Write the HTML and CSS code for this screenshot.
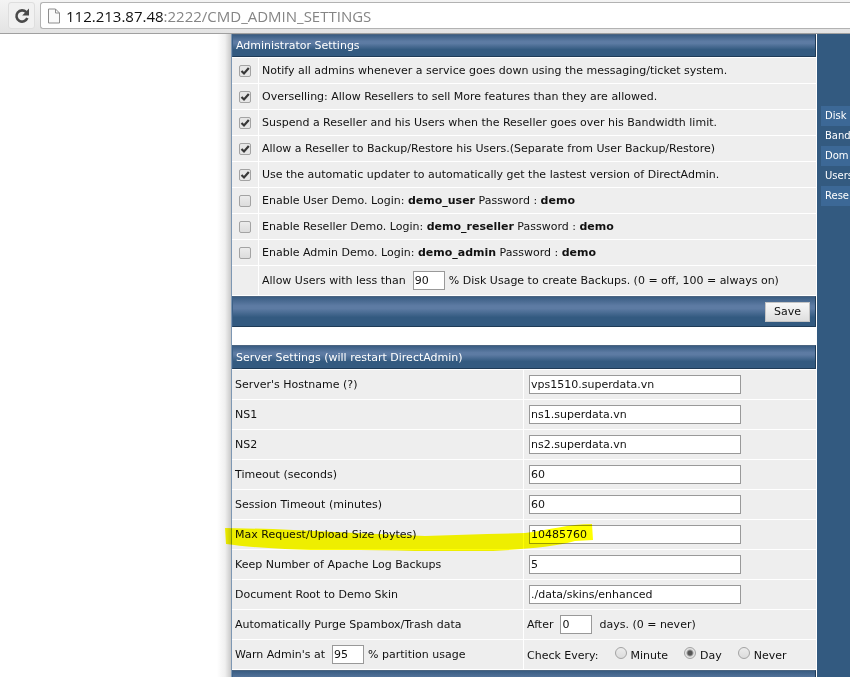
FILE: index.html
```
<!DOCTYPE html>
<html lang="en">
<head>
    <meta charset="UTF-8">
    <meta name="viewport" content="width=device-width, initial-scale=1.0">
    <title>Administrator Settings</title>
    <link rel="stylesheet" href="styles.css">
</head>
<body>
    <!-- Browser toolbar -->
    <div class="toolbar">
        <button class="reload" type="button" aria-label="Reload">
            <svg width="18" height="18" viewBox="0 0 18 18">
                <path d="M13.2 5.2A5.6 5.6 0 1 0 14.3 11" fill="none" stroke="#4a4a4a" stroke-width="2.6"/>
                <path d="M16 1.6V8.4H9.2Z" fill="#4a4a4a"/>
            </svg>
        </button>
        <div class="address">
            <svg width="12" height="16" viewBox="0 0 12 16">
                <path d="M.5 1H7.5L11.5 5V15H.5Z" fill="#fafafa" stroke="#8d8d8d"/>
                <path d="M7.5 1V5H11.5" fill="none" stroke="#8d8d8d"/>
            </svg>
            <span class="url"><span class="host">112.213.87.48</span>:2222/CMD_ADMIN_SETTINGS</span>
        </div>
    </div>

    <div class="page">
        <div class="margin"></div>

        <form class="main">
            <table class="admin">
                <colgroup>
                    <col class="check-col">
                    <col>
                </colgroup>
                <thead>
                    <tr><th colspan="2">Administrator Settings</th></tr>
                </thead>
                <tbody>
                    <tr>
                        <td><input type="checkbox" id="notify" checked></td>
                        <td><label for="notify">Notify all admins whenever a service goes down using the messaging/ticket system.</label></td>
                    </tr>
                    <tr>
                        <td><input type="checkbox" id="oversell" checked></td>
                        <td><label for="oversell">Overselling: Allow Resellers to sell More features than they are allowed.</label></td>
                    </tr>
                    <tr>
                        <td><input type="checkbox" id="suspend" checked></td>
                        <td><label for="suspend">Suspend a Reseller and his Users when the Reseller goes over his Bandwidth limit.</label></td>
                    </tr>
                    <tr>
                        <td><input type="checkbox" id="backup" checked></td>
                        <td><label for="backup">Allow a Reseller to Backup/Restore his Users.(Separate from User Backup/Restore)</label></td>
                    </tr>
                    <tr>
                        <td><input type="checkbox" id="autoupdate" checked></td>
                        <td><label for="autoupdate">Use the automatic updater to automatically get the lastest version of DirectAdmin.</label></td>
                    </tr>
                    <tr>
                        <td><input type="checkbox" id="demouser"></td>
                        <td><label for="demouser">Enable User Demo. Login: <b>demo_user</b> Password : <b>demo</b></label></td>
                    </tr>
                    <tr>
                        <td><input type="checkbox" id="demoreseller"></td>
                        <td><label for="demoreseller">Enable Reseller Demo. Login: <b>demo_reseller</b> Password : <b>demo</b></label></td>
                    </tr>
                    <tr>
                        <td><input type="checkbox" id="demoadmin"></td>
                        <td><label for="demoadmin">Enable Admin Demo. Login: <b>demo_admin</b> Password : <b>demo</b></label></td>
                    </tr>
                    <tr class="tall">
                        <td></td>
                        <td>
                            <div class="line">
                                <label for="usage">Allow Users with less than</label>
                                <input class="short" type="text" id="usage" value="90">
                                <span>% Disk Usage to create Backups. (0 = off, 100 = always on)</span>
                            </div>
                        </td>
                    </tr>
                </tbody>
            </table>
            <div class="bar"><button class="save" type="button">Save</button></div>

            <table class="server">
                <thead>
                    <tr><th colspan="2">Server Settings (will restart DirectAdmin)</th></tr>
                </thead>
                <tbody>
                    <tr>
                        <td><label for="hostname">Server's Hostname (?)</label></td>
                        <td><input class="long" type="text" id="hostname" value="vps1510.superdata.vn"></td>
                    </tr>
                    <tr>
                        <td><label for="ns1">NS1</label></td>
                        <td><input class="long" type="text" id="ns1" value="ns1.superdata.vn"></td>
                    </tr>
                    <tr>
                        <td><label for="ns2">NS2</label></td>
                        <td><input class="long" type="text" id="ns2" value="ns2.superdata.vn"></td>
                    </tr>
                    <tr>
                        <td><label for="timeout">Timeout (seconds)</label></td>
                        <td><input class="long" type="text" id="timeout" value="60"></td>
                    </tr>
                    <tr>
                        <td><label for="session">Session Timeout (minutes)</label></td>
                        <td><input class="long" type="text" id="session" value="60"></td>
                    </tr>
                    <tr>
                        <td class="marked">
                            <label for="maxsize">Max Request/Upload Size (bytes)</label>
                            <!-- Highlighter stroke -->
                            <svg class="marker" width="370" height="32" viewBox="0 0 370 32">
                                <path d="M0 8L48 9L130 13L200 16L262 14L300 13C325 10 343 4 367 4L368 20L350 21C330 27 300 29 268 31H190C140 29 90 31 60 29C35 28 15 26 1 24Z" fill="#ffff00"/>
                            </svg>
                        </td>
                        <td><input class="long" type="text" id="maxsize" value="10485760"></td>
                    </tr>
                    <tr>
                        <td><label for="logs">Keep Number of Apache Log Backups</label></td>
                        <td><input class="long" type="text" id="logs" value="5"></td>
                    </tr>
                    <tr>
                        <td><label for="docroot">Document Root to Demo Skin</label></td>
                        <td><input class="long" type="text" id="docroot" value="./data/skins/enhanced"></td>
                    </tr>
                    <tr>
                        <td><label for="purge">Automatically Purge Spambox/Trash data</label></td>
                        <td>
                            <div class="line purge">
                                <span>After</span>
                                <input class="short" type="text" id="purge" value="0">
                                <span>days. (0 = never)</span>
                            </div>
                        </td>
                    </tr>
                    <tr>
                        <td>
                            <div class="line">
                                <label for="warn">Warn Admin's at</label>
                                <input class="short" type="text" id="warn" value="95">
                                <span>% partition usage</span>
                            </div>
                        </td>
                        <td>
                            <div class="line every">
                                <span>Check Every:</span>
                                <label><input type="radio" name="every">Minute</label>
                                <label><input type="radio" name="every" checked>Day</label>
                                <label><input type="radio" name="every">Never</label>
                            </div>
                        </td>
                    </tr>
                </tbody>
            </table>
            <div class="bar"></div>
        </form>

        <!-- Usage panel, runs off the right edge -->
        <div class="side">
            <ul>
                <li>Disk</li>
                <li>Band</li>
                <li>Dom</li>
                <li>Users</li>
                <li>Rese</li>
            </ul>
        </div>
    </div>
</body>
</html>
```
FILE: styles.css
```
* {
    box-sizing: border-box;
}

body {
    margin: 0;
    height: 100vh;
    overflow: hidden;
    display: flex;
    flex-direction: column;
    font-family: Verdana, "DejaVu Sans", sans-serif;
    font-size: 11px;
    color: #111;
    background: #fff;
}

input, button {
    font: inherit;
    color: inherit;
    margin: 0;
}

/* Browser toolbar */
.toolbar {
    display: flex;
    flex: none;
    align-items: flex-start;
    gap: 5px;
    height: 34px;
    padding: 2px 0 0 8px;
    background: linear-gradient(#f4f4f4, #e3e3e3);
    border-bottom: 1px solid #a0a0a0;
}

.reload {
    width: 27px;
    height: 27px;
    padding: 4px;
    border: 1px solid #dedede;
    border-radius: 3px;
    background: #f1f1f1;
}

.reload svg {
    display: block;
}

.address {
    display: flex;
    flex: 1;
    align-items: center;
    gap: 6px;
    height: 27px;
    padding-left: 7px;
    border: 1px solid #b2b2b2;
    border-right: none;
    border-radius: 3px 0 0 3px;
    background: #fff;
}

.url {
    font-family: "Open Sans", "Noto Sans", sans-serif;
    font-size: 15px;
    line-height: 20px;
    color: #858585;
    white-space: nowrap;
}

.host {
    color: #111;
}

/* Page columns */
.page {
    display: grid;
    flex: 1;
    grid-template-columns: 231px minmax(0, 1fr) 33px;
    min-height: 0;
    overflow: hidden;
}

.margin {
    background: linear-gradient(to left, #c9c9c9, #f0f0f0 6px, #fff 14px);
}

.main {
    padding-right: 1px;
    border-left: 1px solid #7d97b3;
}

/* Settings tables */
table {
    width: 100%;
    border-collapse: separate;
    border-spacing: 0;
    table-layout: fixed;
}

th, .bar {
    background: linear-gradient(#395c82, #5d7ba3 30%, #5d7ba3 40%, #335a80 70%, #335a80);
    border: 1px solid #1f3b57;
    border-top-color: #4b6480;
    border-left-color: #3d6188;
}

th {
    height: 23px;
    padding: 0 3px;
    font-weight: normal;
    text-align: left;
    color: #fff;
}

.server th {
    height: 24px;
}

td {
    height: 26px;
    padding: 0 3px;
    background: #eee;
    border-bottom: 1px solid #fff;
    white-space: nowrap;
}

td:first-child {
    border-right: 1px solid #fff;
}

tbody tr:first-child td {
    height: 27px;
    border-top: 1px solid #fff;
}

.check-col {
    width: 27px;
}

.tall td, .server td {
    height: 30px;
}

.server tbody tr:first-child td {
    height: 31px;
}

.server {
    margin-top: 18px;
}

.bar {
    display: flex;
    align-items: center;
    justify-content: flex-end;
    height: 31px;
    padding-right: 5px;
}

.save {
    height: 20px;
    padding: 0 8px;
    border: 1px solid #c4c4c4;
    background: linear-gradient(#f8f8f8, #dedede);
}

/* Fields */
.line {
    display: flex;
    align-items: center;
    gap: 4px;
}

.line label + .short, .line span + .short {
    margin-left: 3px;
}

.purge .short + span {
    margin-left: 3px;
}

input[type="text"] {
    height: 19px;
    padding: 0 1px;
    border: 1px solid #999;
    background: #fff;
}

.long {
    display: block;
    width: 212px;
    margin-left: 2px;
}

.short {
    width: 32px;
}

input[type="checkbox"], input[type="radio"] {
    appearance: none;
    flex: none;
    width: 12px;
    height: 12px;
    border: 1px solid #a3a3a3;
    background: linear-gradient(#ececec, #dcdcdc);
}

input[type="checkbox"] {
    display: block;
    margin: 0 auto;
    border-radius: 2px;
}

input[type="checkbox"]:checked {
    background: url("data:image/svg+xml,%3Csvg xmlns='http://www.w3.org/2000/svg' viewBox='0 0 10 10'%3E%3Cpath d='M1.5 5L4 7.5L8.8 2' fill='none' stroke='%23383838' stroke-width='2.2'/%3E%3C/svg%3E") #e6e6e6;
}

input[type="radio"] {
    border-radius: 50%;
}

input[type="radio"]:checked {
    background: radial-gradient(circle, #555 2px, #e4e4e4 4px);
}

.every {
    gap: 16px;
    align-items: flex-end;
}

.every label {
    display: flex;
    align-items: flex-end;
    gap: 4px;
}

.every input {
    margin-bottom: 3px;
}

/* Highlighter */
.marked {
    position: relative;
}

.marker {
    position: absolute;
    left: -7px;
    top: 0;
    z-index: 1;
    mix-blend-mode: multiply;
    pointer-events: none;
}

/* Usage panel */
.side {
    padding: 72px 0 0 4px;
    overflow: hidden;
    background: #335a80;
}

.side ul {
    margin: 0;
    padding: 0;
    list-style: none;
}

.side li {
    height: 20px;
    padding-left: 4px;
    font-size: 10px;
    line-height: 20px;
    color: #fff;
    white-space: nowrap;
}

.side li:nth-child(odd) {
    background: #3c6896;
}
```
